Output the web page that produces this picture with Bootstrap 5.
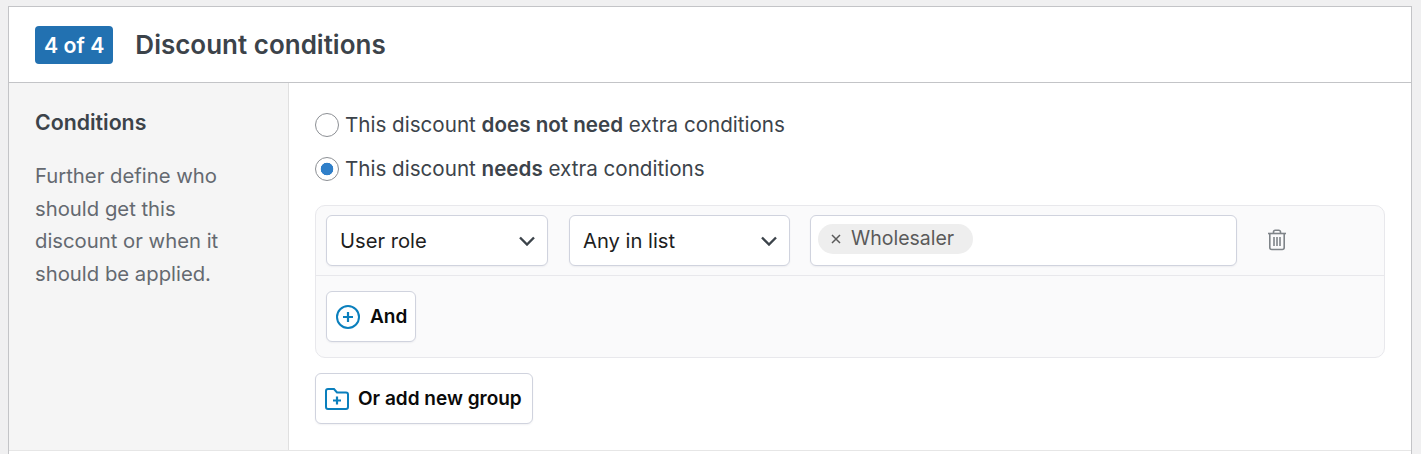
<!DOCTYPE html>
<html lang="en">
  <head>
    <meta charset="UTF-8" />
    <meta name="viewport" content="width=device-width, initial-scale=1.0" />
    <title>Discount conditions</title>
    <link href="https://cdn.jsdelivr.net/npm/bootstrap@5.3.0/dist/css/bootstrap.min.css" rel="stylesheet" />
    <style>
      body {
        background-color: #f0f0f1;
        font-family: Inter, "Noto Sans", sans-serif;
        color: #3c434a;
        height: 454px;
        overflow: hidden;
      }

      .panel {
        margin: 6px 9px 0 8px;
        background: #fff;
        border: 1px solid #c3c4c7;
        border-bottom: 0;
        height: 460px;
      }

      .panel-head {
        height: 76px;
        padding: 0 26px;
        gap: 22px;
        border-bottom: 1px solid #c3c4c7;
      }

      .step-tag {
        background: #2271b1;
        color: #fff;
        border-radius: 4px;
        font-size: 21.3px;
        font-weight: 600;
        line-height: 38px;
        padding: 0 9px;
      }

      .panel-title {
        font-size: 26px;
        font-weight: 600;
        margin: 0;
        color: #3c434a;
      }

      .panel-body {
        height: 368px;
        border-bottom: 1px solid #e6e6e6;
      }

      .side-col {
        width: 280px;
        flex: none;
        background: #f5f5f5;
        border-right: 1px solid #e0e0e0;
        padding: 25px 40px 0 26px;
      }

      .side-title {
        font-size: 21.3px;
        font-weight: 600;
        line-height: 28px;
        margin-bottom: 24px;
      }

      .side-text {
        font-size: 20.3px;
        line-height: 32.5px;
        color: #646970;
        margin: 0;
      }

      .main-col {
        padding: 30px 26px 0 26px;
      }

      .opt-line {
        height: 24px;
        margin-bottom: 20px;
        font-size: 20.6px;
        line-height: 24px;
        padding: 0;
        min-height: 0;
        gap: 6px;
      }

      .opt-line .form-check-input {
        width: 24px;
        height: 24px;
        margin: 0;
        float: none;
        border-color: #8c8f94;
        flex: none;
      }

      .opt-line .form-check-input:checked {
        background-color: #fff;
        border-color: #8c8f94;
        background-image: radial-gradient(circle, #2f7fc9 0, #2f7fc9 6px, transparent 6.6px);
      }

      .opt-line b {
        font-weight: 600;
      }

      .cond-group {
        margin-top: 24px;
        background: #fafafb;
        border: 1px solid #e8e8ec;
        border-radius: 10px;
      }

      .cond-row {
        padding: 9px 10px;
        height: 70px;
        border-bottom: 1px solid #e8e8ec;
      }

      .cond-select {
        height: 51px;
        font-family: inherit;
        font-size: 20.2px;
        color: #1e1e1e;
        border: 1px solid #d0d3de;
        border-radius: 6px;
        padding: 2px 36px 0 13px;
        box-shadow: 0 1px 2px rgba(30, 30, 60, 0.06);
        background-image: url("data:image/svg+xml,%3csvg xmlns='http://www.w3.org/2000/svg' viewBox='0 0 16 10'%3e%3cpath fill='none' stroke='%233c434a' stroke-width='2.400' d='M1 1.500l7 7 7-7'/%3e%3c/svg%3e");
        background-size: 16px 10px;
        background-position: right 12px center;
      }

      .pick-role {
        width: 222px;
        margin-right: 21px;
      }

      .pick-match {
        width: 221px;
        margin-right: 20px;
      }

      .tag-box {
        width: 427px;
        height: 51px;
        background: #fff;
        border: 1px solid #d0d3de;
        border-radius: 6px;
        padding: 0 7px 3px 7px;
        box-shadow: 0 1px 2px rgba(30, 30, 60, 0.06);
      }

      .tag-pill {
        background: #eeeeee;
        border-radius: 15px;
        height: 30px;
        padding: 0 19px 0 13px;
        font-size: 19.5px;
        color: #5a5a5a;
        gap: 10px;
      }

      .trash-btn {
        margin-left: 30px;
        margin-bottom: 2px;
        line-height: 0;
      }

      .and-row {
        padding: 15px 10px;
        height: 81px;
      }

      .add-btn {
        height: 51px;
        background: #fff;
        border: 1px solid #d0d3de;
        border-radius: 6px;
        font-size: 19px;
        font-weight: 600;
        color: #0a0a0a;
        padding: 0 9px;
        gap: 10px;
        box-shadow: 0 1px 2px rgba(30, 30, 60, 0.06);
      }

      .add-label {
        padding-top: 2px;
      }

      .and-row .add-btn {
        padding-right: 8px;
      }

      .add-group {
        margin-top: 15px;
        padding-right: 10px;
        gap: 9px;
      }
    </style>
  </head>
  <body>
    <div class="panel">
      <div class="panel-head d-flex align-items-center">
        <span class="step-tag">4 of 4</span>
        <h2 class="panel-title">Discount conditions</h2>
      </div>
      <div class="panel-body d-flex">
        <div class="side-col">
          <div class="side-title">Conditions</div>
          <p class="side-text">Further define who should get this discount or when it should be applied.</p>
        </div>
        <div class="main-col flex-grow-1">
          <label class="opt-line d-flex align-items-center">
            <input class="form-check-input" type="radio" name="need" />
            <span>This discount <b>does not need</b> extra conditions</span>
          </label>
          <label class="opt-line d-flex align-items-center">
            <input class="form-check-input" type="radio" name="need" checked />
            <span>This discount <b>needs</b> extra conditions</span>
          </label>
          <div class="cond-group">
            <div class="cond-row d-flex align-items-start">
              <select class="form-select cond-select pick-role"><option>User role</option></select>
              <select class="form-select cond-select pick-match"><option>Any in list</option></select>
              <div class="tag-box d-flex align-items-center">
                <span class="tag-pill d-inline-flex align-items-center">
                  <svg width="10" height="10" viewBox="0 0 10 10" fill="none" stroke="#5a5a5a" stroke-width="1.5"><path d="M1 1l8 8M9 1l-8 8" /></svg>
                  Wholesaler
                </span>
              </div>
              <span class="trash-btn align-self-center">
                <svg width="20" height="22" viewBox="0 0 20 22" fill="none" stroke="#7f8489" stroke-width="1.6"><path d="M1 4.5h18" /><path d="M6.5 4.2V3a1.8 1.8 0 0 1 1.8-1.8h3.4A1.8 1.8 0 0 1 13.500 3v1.200" /><path d="M2.800 4.500v14a2 2 0 0 0 2 2h10.400a2 2 0 0 0 2-2v-14" /><path d="M7 8v9M10 8v9M13 8v9" /></svg>
              </span>
            </div>
            <div class="and-row">
              <button type="button" class="add-btn d-inline-flex align-items-center">
                <svg width="24" height="24" viewBox="0 0 24 24" fill="none" stroke="#0a7fbd" stroke-width="2"><circle cx="12" cy="12" r="11" /><path d="M12 7v10M7 12h10" stroke-width="2.200" /></svg>
                <span class="add-label">And</span>
              </button>
            </div>
          </div>
          <button type="button" class="add-btn add-group d-inline-flex align-items-center">
            <svg width="24" height="22" viewBox="0 0 24 22" fill="none" stroke="#0a7fbd" stroke-width="2"><path d="M1 3a2 2 0 0 1 2-2h6l3 3.500h9a2 2 0 0 1 2 2V19a2 2 0 0 1-2 2H3a2 2 0 0 1-2-2z" /><path d="M12 8.500v8M8 12.500h8" stroke-width="2.200" /></svg>
            <span class="add-label">Or add new group</span>
          </button>
        </div>
      </div>
    </div>
    <script src="https://cdn.jsdelivr.net/npm/bootstrap@5.3.0/dist/js/bootstrap.bundle.min.js"></script>
  </body>
</html>
